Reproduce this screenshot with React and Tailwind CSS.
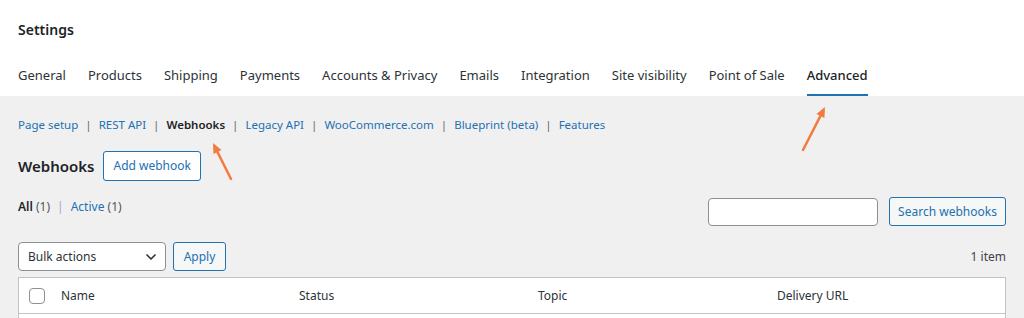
import { ChevronDown } from 'lucide-react'

const tabs = [
  'General',
  'Products',
  'Shipping',
  'Payments',
  'Accounts & Privacy',
  'Emails',
  'Integration',
  'Site visibility',
  'Point of Sale',
  'Advanced',
]

const sections = ['Page setup', 'REST API', 'Webhooks', 'Legacy API', 'WooCommerce.com', 'Blueprint (beta)', 'Features']

function Arrow({ className, x1, y1, x2, y2 }) {
  // orange annotation arrow, head at (x2, y2)
  const ang = Math.atan2(y2 - y1, x2 - x1)
  const len = 11
  const spread = 0.42
  const a = [x2 - len * Math.cos(ang - spread), y2 - len * Math.sin(ang - spread)]
  const b = [x2 - len * Math.cos(ang + spread), y2 - len * Math.sin(ang + spread)]
  return (
    <svg className={className} width="60" height="60" viewBox="0 0 60 60">
      <line x1={x1} y1={y1} x2={x2 - 4 * Math.cos(ang)} y2={y2 - 4 * Math.sin(ang)} stroke="#f47b3f" strokeWidth="2.5" strokeLinecap="round" />
      <polygon points={`${x2},${y2} ${a[0]},${a[1]} ${b[0]},${b[1]}`} fill="#f47b3f" />
    </svg>
  )
}

export default function App() {
  return (
    <div className="relative w-[1024px] h-[318px] overflow-hidden bg-[#f0f0f1] font-['Noto_Sans',sans-serif] text-[#1d2327]">
      {/* Header */}
      <div className="bg-white h-[96px] px-[18px] flex flex-col">
        <h1 className="pt-[19px] text-[14px] font-semibold leading-[22px]">Settings</h1>
        <nav className="mt-auto flex gap-[22px] text-[13px] leading-[20px]">
          {tabs.map((t) => (
            <div
              key={t}
              className={
                t === 'Advanced'
                  ? 'pb-[9px] border-b-2 border-[#2271b1] font-medium text-[#1d2327]'
                  : 'pb-[11px] text-[#2c3338]'
              }
            >
              {t}
            </div>
          ))}
        </nav>
      </div>

      {/* Body */}
      <div className="px-[18px]">
        <div className="mt-[20px] flex items-center text-[11.5px] leading-[18px] text-[#2271b1]">
          {sections.map((s, i) => (
            <span key={s} className="flex items-center">
              {i > 0 && <span className="mx-[7px] text-[#646970]">|</span>}
              <span className={s === 'Webhooks' ? 'font-semibold text-[#1d2327]' : ''}>{s}</span>
            </span>
          ))}
        </div>

        <div className="mt-[17px] flex items-center gap-[9px]">
          <h2 className="text-[15px] font-semibold leading-[24px]">Webhooks</h2>
          <button className="h-[30px] px-[9px] border border-[#2271b1] rounded-[3px] bg-white text-[12px] text-[#2271b1]">
            Add webhook
          </button>
        </div>

        <div className="mt-[16px] flex items-end justify-between">
          <div className="pb-[10px] text-[12px] leading-[18px]">
            <span className="font-semibold">All</span> <span className="text-[#50575e]">(1)</span>
            <span className="mx-[7px] text-[#a7aaad]">|</span>
            <span className="text-[#2271b1]">Active <span className="text-[#50575e]">(1)</span></span>
          </div>
          <div className="flex items-center gap-[11px]">
            <input className="w-[170px] h-[28px] bg-white border border-[#8c8f94] rounded-[4px]" />
            <button className="h-[29px] w-[117px] border border-[#2271b1] rounded-[3px] bg-[#f6f7f7] text-[12px] text-[#2271b1]">
              Search webhooks
            </button>
          </div>
        </div>

        <div className="mt-[16px] flex items-center justify-between">
          <div className="flex items-center gap-[7px]">
            <div className="w-[148px] h-[29px] bg-white border border-[#8c8f94] rounded-[4px] flex items-center justify-between pl-[9px] pr-[6px] text-[12px] text-[#2c3338]">
              Bulk actions
              <ChevronDown size={16} strokeWidth={2.5} className="text-[#2c3338]" />
            </div>
            <button className="h-[29px] w-[53px] border border-[#2271b1] rounded-[3px] bg-[#f6f7f7] text-[12px] text-[#2271b1]">
              Apply
            </button>
          </div>
          <span className="text-[12px] text-[#3c434a]">1 item</span>
        </div>

        <div className="mt-[6px] bg-white border border-[#c3c4c7] h-[60px]">
          <div className="h-[36px] border-b border-[#c3c4c7] grid grid-cols-[42px_238px_239px_239px_1fr] items-center text-[12px] text-[#2c3338]">
            <div className="pl-[10px]">
              <div className="w-[16px] h-[16px] border border-[#8c8f94] rounded-[4px] bg-white" />
            </div>
            <div>Name</div>
            <div>Status</div>
            <div>Topic</div>
            <div>Delivery URL</div>
          </div>
        </div>
      </div>

      {/* Annotations */}
      <Arrow className="absolute left-[200px] top-[132px]" x1={31} y1={47} x2={13} y2={11} />
      <Arrow className="absolute left-[790px] top-[100px]" x1={13} y1={50} x2={35} y2={7} />
    </div>
  )
}
